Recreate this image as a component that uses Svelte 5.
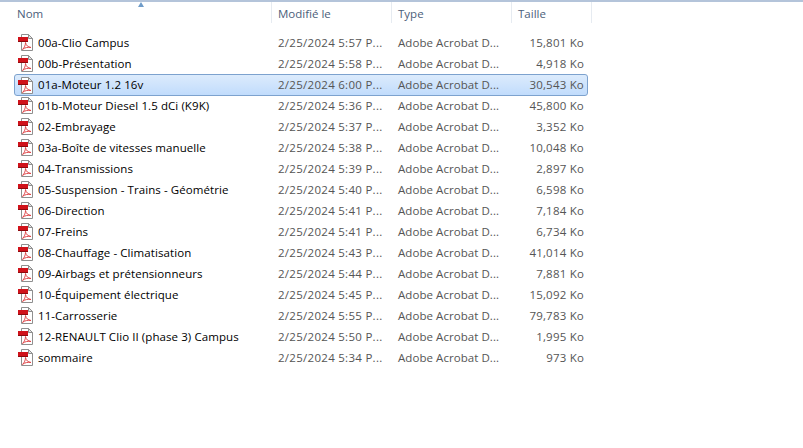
<script>
  const rows = [
    ['00a-Clio Campus','2/25/2024 5:57 P...','15,801 Ko'],
    ['00b-Présentation','2/25/2024 5:58 P...','4,918 Ko'],
    ['01a-Moteur 1.2 16v','2/25/2024 6:00 P...','30,543 Ko'],
    ['01b-Moteur Diesel 1.5 dCi (K9K)','2/25/2024 5:36 P...','45,800 Ko'],
    ['02-Embrayage','2/25/2024 5:37 P...','3,352 Ko'],
    ['03a-Boîte de vitesses manuelle','2/25/2024 5:38 P...','10,048 Ko'],
    ['04-Transmissions','2/25/2024 5:39 P...','2,897 Ko'],
    ['05-Suspension - Trains - Géométrie','2/25/2024 5:40 P...','6,598 Ko'],
    ['06-Direction','2/25/2024 5:41 P...','7,184 Ko'],
    ['07-Freins','2/25/2024 5:41 P...','6,734 Ko'],
    ['08-Chauffage - Climatisation','2/25/2024 5:43 P...','41,014 Ko'],
    ['09-Airbags et prétensionneurs','2/25/2024 5:44 P...','7,881 Ko'],
    ['10-Équipement électrique','2/25/2024 5:45 P...','15,092 Ko'],
    ['11-Carrosserie','2/25/2024 5:55 P...','79,783 Ko'],
    ['12-RENAULT Clio II (phase 3) Campus','2/25/2024 5:50 P...','1,995 Ko'],
    ['sommaire','2/25/2024 5:34 P...','973 Ko'],
  ];
</script>

<div class="win">
  <div class="head">
    <div class="hc name">Nom<span class="sort"></span></div>
    <div class="hc date">Modifié le</div>
    <div class="hc type">Type</div>
    <div class="hc size">Taille</div>
  </div>
  <div class="list">
    {#each rows as r, i}
      <div class="row" class:sel={i === 2}>
        <div class="cell name">
          <svg class="ic" width="16" height="17" viewBox="0 0 16 17">
            <path d="M3.500 .5H10.500L14.500 4.500V16.500H3.500Z" fill="#fff" stroke="#8f8f8f"/>
            <path d="M10.500 .5V4.500H14.500Z" fill="#e4e4e4" stroke="#8f8f8f"/>
            <rect x="0" y="3" width="10" height="4" fill="#d0121a"/>
            <rect x="0" y="7" width="10" height="1" fill="#8c0a0e"/>
            <path d="M7.500 8.500C7.500 11 6.500 13.500 4.500 15.500C6.500 13.500 10 13 13 13.500C10 13 8 11.500 7.500 8.500Z" fill="none" stroke="#e0474a" stroke-width="1"/>
          </svg>
          <span>{r[0]}</span>
        </div>
        <div class="cell date">{r[1]}</div>
        <div class="cell type">Adobe Acrobat D...</div>
        <div class="cell size">{r[2]}</div>
      </div>
    {/each}
  </div>
</div>

<style>
  :global(body) { margin: 0; background: #fff; }
  .win {
    width: 803px;
    height: 448px;
    overflow: hidden;
    background: #fff;
    font-family: "Open Sans", "Noto Sans", sans-serif;
    font-size: 11.500px;
    border-top: 2px solid #b4c4da;
    box-sizing: border-box;
  }
  .head {
    display: flex;
    height: 21px;
    width: 592px;
    color: #4c607a;
  }
  .hc {
    box-sizing: border-box;
    padding: 4px 0 0 6px;
    border-right: 1px solid #e6ebf1;
    line-height: 16px;
    position: relative;
  }
  .hc.name { width: 272px; padding-left: 17px; }
  .hc.date { width: 120px; }
  .hc.type { width: 120px; }
  .hc.size { width: 80px; }
  .sort {
    position: absolute;
    left: 138px;
    top: 0;
    border: 3.500px solid transparent;
    border-top: 0;
    border-bottom: 5px solid #6f9cc9;
  }
  .list { padding: 9px 0 0 14px; }
  .row {
    display: flex;
    height: 21px;
    width: 574px;
    box-sizing: border-box;
    align-items: center;
    border: 1px solid transparent;
    border-radius: 3px;
    color: #000;
  }
  .row.sel {
    height: 22px;
    margin: 0 0 -1px;
    border-color: #7da2ce;
    background: linear-gradient(#dcebfc, #c1dcfc);
  }
  .cell { white-space: nowrap; line-height: 16px; }
  .cell.name {
    width: 257px;
    display: flex;
    align-items: center;
    gap: 4px;
    padding-left: 3px;
    box-sizing: border-box;
    color: #000;
    letter-spacing: 0.08px;
  }
  .cell.date { width: 120px; padding-left: 6px; box-sizing: border-box; color: #555; letter-spacing: 0.28px; }
  .cell.type { width: 120px; padding-left: 6px; box-sizing: border-box; color: #555; letter-spacing: 0.06px; }
  .cell.size { width: 72px; text-align: right; color: #555; letter-spacing: 0.2px; }
  .ic { flex: none; }
</style>
